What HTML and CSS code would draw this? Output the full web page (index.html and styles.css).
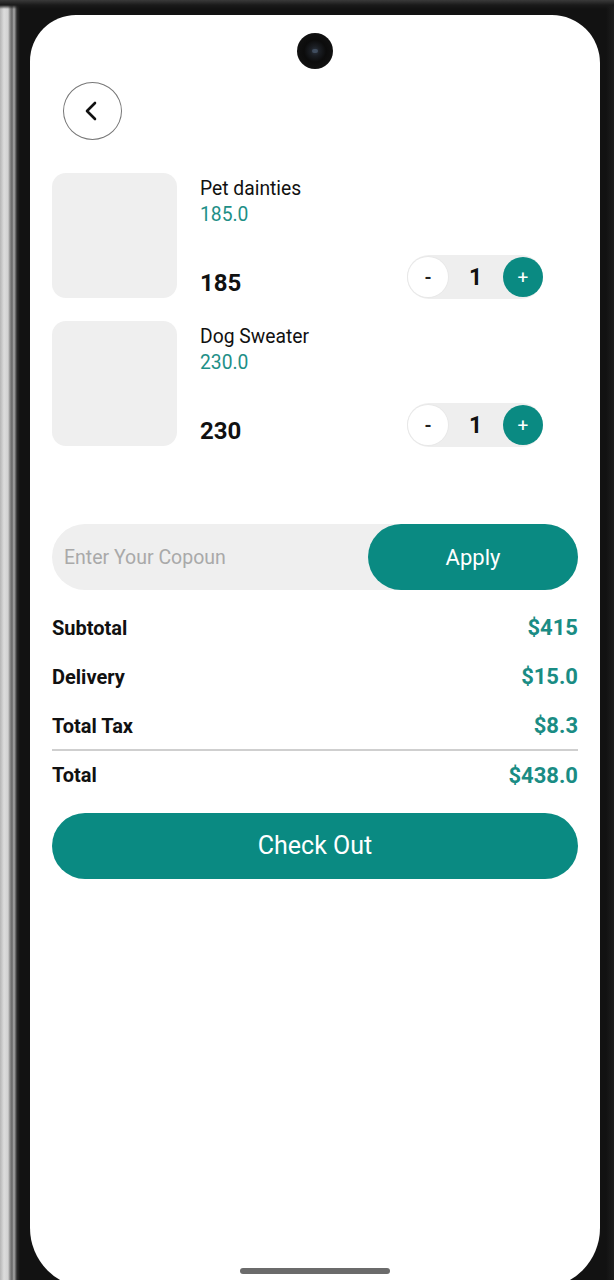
FILE: index.html
```html
<!DOCTYPE html>
<html lang="en">
<head>
<meta charset="utf-8">
<title>Cart</title>
<link rel="stylesheet" href="styles.css">
</head>
<body>
<div class="device">
  <div class="screen">
    <div class="camera"><span class="lens"></span></div>

    <button class="back" aria-label="Back">
      <svg width="14" height="20" viewBox="0 0 14 20"><path d="M11 2 L3 10 L11 18" fill="none" stroke="#111" stroke-width="2.6" stroke-linecap="round" stroke-linejoin="round"/></svg>
    </button>

    <div class="items">
      <div class="item">
        <div class="thumb"></div>
        <div class="info">
          <div class="name">Pet dainties</div>
          <div class="unit">185.0</div>
          <div class="bottom">
            <div class="total">185</div>
            <div class="stepper">
              <span class="minus">-</span>
              <span class="qty">1</span>
              <span class="plus">+</span>
            </div>
          </div>
        </div>
      </div>
      <div class="item">
        <div class="thumb"></div>
        <div class="info">
          <div class="name">Dog Sweater</div>
          <div class="unit">230.0</div>
          <div class="bottom">
            <div class="total">230</div>
            <div class="stepper">
              <span class="minus">-</span>
              <span class="qty">1</span>
              <span class="plus">+</span>
            </div>
          </div>
        </div>
      </div>
    </div>

    <div class="coupon">
      <input class="coupon-input" type="text" placeholder="Enter Your Copoun">
      <button class="apply">Apply</button>
    </div>

    <div class="summary">
      <div class="row"><span class="label">Subtotal</span><span class="value">$415</span></div>
      <div class="row"><span class="label">Delivery</span><span class="value">$15.0</span></div>
      <div class="row"><span class="label">Total Tax</span><span class="value">$8.3</span></div>
      <div class="divider"></div>
      <div class="row"><span class="label">Total</span><span class="value">$438.0</span></div>
    </div>

    <button class="checkout">Check Out</button>

    <div class="home-indicator"></div>
  </div>
</div>
</body>
</html>
```

FILE: styles.css
```css
* { box-sizing: border-box; }

html, body {
  margin: 0;
  padding: 0;
  width: 614px;
  height: 1280px;
  overflow: hidden;
  background: #111;
  font-family: Roboto, "Noto Sans", sans-serif;
}

.device {
  width: 614px;
  height: 1280px;
  padding: 15px 14px 0 30px;
  background:
    linear-gradient(to bottom, #3a3a3a 0, #1a1a1a 5px, rgba(17,17,17,0) 9px),
    linear-gradient(to right, #b5b5b5 0, #dcdcdc 4px, #d2d2d2 8px, #8c8c8c 10px, #666 12px, #a9a9a9 14px, #2a2a2a 17px, #121212 20px, #121212 606px, #1e1e1e 614px);
  overflow: hidden;
}

.screen {
  position: relative;
  width: 570px;
  height: 1273px;
  background: #fff;
  border-radius: 46px 48px 60px 60px;
  padding: 67px 22px 0;
}

.camera {
  position: absolute;
  top: 18px;
  left: 267px;
  width: 36px;
  height: 36px;
  border-radius: 50%;
  background: radial-gradient(circle at 50% 50%, #2c3440 0, #1a1d22 5px, #0c0c0c 11px, #111 18px);
  display: flex;
  align-items: center;
  justify-content: center;
}

.lens {
  width: 6px;
  height: 4px;
  border-radius: 2px;
  background: #4a5a6e;
  opacity: 0.7;
}

.back {
  display: flex;
  align-items: center;
  justify-content: center;
  width: 59px;
  height: 58px;
  margin: 0 0 33px 11px;
  padding: 0 3px 0 0;
  border: 1.3px solid #777;
  border-radius: 50%;
  background: #fff;
}

.items {
  display: flex;
  flex-direction: column;
  gap: 23px;
}

.item {
  display: flex;
  gap: 23px;
  height: 125px;
}

.thumb {
  width: 125px;
  height: 125px;
  border-radius: 14px;
  background: #efefef;
  flex: none;
}

.info {
  flex: 1;
  display: flex;
  flex-direction: column;
  padding-top: 5px;
}

.name {
  font-size: 19.3px;
  line-height: 22px;
  color: #111;
}

.unit {
  font-size: 19.3px;
  line-height: 22px;
  margin-top: 4px;
  color: #1e8f87;
}

.bottom {
  margin-top: auto;
  display: flex;
  justify-content: space-between;
  align-items: center;
  padding-right: 35px;
  margin-bottom: -1px;
}

.total {
  font-size: 24px;
  font-weight: 700;
  line-height: 28px;
  color: #111;
  align-self: flex-end;
  margin-bottom: 2px;
}

.stepper {
  display: flex;
  align-items: center;
  width: 136px;
  height: 44px;
  padding-left: 1px;
  border-radius: 22px;
  background: #eeeeee;
}

.minus {
  width: 40px;
  height: 40px;
  border-radius: 50%;
  background: #fff;
  box-shadow: 0 0 0 1px #e8e8e8;
  display: flex;
  align-items: center;
  justify-content: center;
  font-size: 18px;
  font-weight: 700;
  color: #222;
}

.qty {
  width: 55px;
  text-align: center;
  font-size: 23px;
  font-weight: 700;
  color: #111;
}

.plus {
  width: 40px;
  height: 40px;
  border-radius: 50%;
  background: #0a8a82;
  display: flex;
  align-items: center;
  justify-content: center;
  font-size: 19px;
  color: #fff;
}

.coupon {
  display: flex;
  margin-top: 78px;
  height: 66px;
  border-radius: 33px;
  background: #efefef;
}

.coupon-input {
  flex: 1;
  min-width: 0;
  border: 0;
  outline: 0;
  background: transparent;
  padding: 0 0 0 12px;
  font-family: Roboto, "Noto Sans", sans-serif;
  font-size: 19.5px;
  color: #333;
}

.coupon-input::placeholder {
  color: #a9a9a9;
}

.apply {
  width: 210px;
  height: 66px;
  border: 0;
  border-radius: 33px;
  background: #0a8a82;
  color: #fff;
  font-family: Roboto, "Noto Sans", sans-serif;
  font-size: 22px;
}

.summary {
  margin-top: 13px;
  display: flex;
  flex-direction: column;
}

.row {
  display: flex;
  justify-content: space-between;
  align-items: center;
  height: 49px;
}

.label {
  font-size: 20px;
  font-weight: 700;
  color: #111;
}

.value {
  font-size: 22px;
  font-weight: 700;
  color: #1a8c84;
}

.divider {
  height: 1.5px;
  background: #cfcfcf;
  margin-top: -1px;
}

.checkout {
  display: block;
  width: 100%;
  height: 66px;
  margin-top: 13px;
  border: 0;
  border-radius: 33px;
  background: #0a8a82;
  color: #fff;
  font-family: Roboto, "Noto Sans", sans-serif;
  font-size: 25px;
}

.home-indicator {
  position: absolute;
  left: 210px;
  bottom: 14px;
  width: 150px;
  height: 6px;
  border-radius: 3px;
  background: #6b6b6b;
}
```
